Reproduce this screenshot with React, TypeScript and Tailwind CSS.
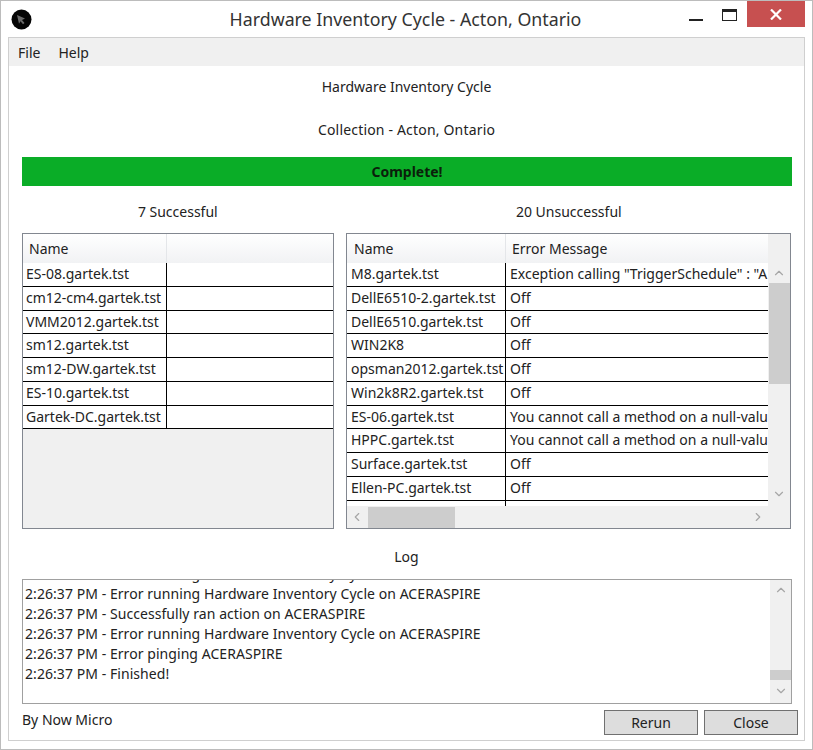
import { ChevronDown, ChevronLeft, ChevronRight, ChevronUp } from "lucide-react";

const successful = [
  "ES-08.gartek.tst",
  "cm12-cm4.gartek.tst",
  "VMM2012.gartek.tst",
  "sm12.gartek.tst",
  "sm12-DW.gartek.tst",
  "ES-10.gartek.tst",
  "Gartek-DC.gartek.tst",
];

const unsuccessful = [
  ["M8.gartek.tst", 'Exception calling "TriggerSchedule" : "A remote error occurred"'],
  ["DellE6510-2.gartek.tst", "Off"],
  ["DellE6510.gartek.tst", "Off"],
  ["WIN2K8", "Off"],
  ["opsman2012.gartek.tst", "Off"],
  ["Win2k8R2.gartek.tst", "Off"],
  ["ES-06.gartek.tst", "You cannot call a method on a null-valued expression."],
  ["HPPC.gartek.tst", "You cannot call a method on a null-valued expression."],
  ["Surface.gartek.tst", "Off"],
  ["Ellen-PC.gartek.tst", "Off"],
];

const logLines = [
  "2:26:37 PM - Error running Hardware Inventory Cycle on ACERASPIRE",
  "2:26:37 PM - Error running Hardware Inventory Cycle on ACERASPIRE",
  "2:26:37 PM - Successfully ran action on ACERASPIRE",
  "2:26:37 PM - Error running Hardware Inventory Cycle on ACERASPIRE",
  "2:26:37 PM - Error pinging ACERASPIRE",
  "2:26:37 PM - Finished!",
];

function HeaderCell({ label, className }: { label?: string; className: string }) {
  return <div className={`flex h-full shrink-0 items-center ${className}`}>{label}</div>;
}

function Row({ name, message, nameClass }: { name: string; message?: string; nameClass: string }) {
  return (
    <div className="flex h-[23.75px] shrink-0 border-b border-black bg-white">
      <div className={`shrink-0 overflow-hidden whitespace-nowrap border-r border-black leading-[22px] ${nameClass}`}>
        {name}
      </div>
      <div className="min-w-0 flex-1 overflow-hidden whitespace-nowrap pl-[4px] leading-[22px]">{message}</div>
    </div>
  );
}

export default function App() {
  return (
    <div
      className="flex h-[750px] w-[813px] flex-col border border-[#bcbcbc] bg-white text-[14px] text-[#222]"
      style={{ fontFamily: '"Noto Sans", "Open Sans", sans-serif' }}
    >
      {/* title bar */}
      <div className="relative flex h-[36px] shrink-0 items-center justify-center">
        <svg className="absolute left-[10px] top-[8px]" width="21" height="21" viewBox="0 0 21 21">
          <circle cx="10.5" cy="10.5" r="10" fill="#050505" />
          <path d="M6 6l8 3.500-3 1.500 2.500 3-1.500 1.200-2.500-3-1.500 2.500z" fill="#6a6a6a" />
        </svg>
        <span className="-ml-[2px] text-[17.8px] text-[#333]">Hardware Inventory Cycle - Acton, Ontario</span>
        <div className="absolute right-[7px] top-0 flex items-start">
          <div className="mr-[19px] mt-[18px] h-[2px] w-[14px] bg-[#222]" />
          <div className="mr-[10px] mt-[8px] h-[12px] w-[15px] border border-t-[3px] border-[#222]" />
          <div className="flex h-[26px] w-[58px] items-center justify-center bg-[#c75050]">
            <svg width="12" height="11" viewBox="0 0 12 11">
              <path d="M1 .5l10 10M11 .5l-10 10" stroke="#fff" strokeWidth="2.200" />
            </svg>
          </div>
        </div>
      </div>

      {/* client area */}
      <div className="mx-[7px] flex h-[704px] w-[797px] flex-col border border-[#cfcfcf]">
        <div className="flex h-[28px] shrink-0 items-center gap-[18px] bg-[#f0f0f0] pl-[9px]">
          <span>File</span>
          <span>Help</span>
        </div>

        <div className="flex min-h-0 flex-1 flex-col px-[13px]">
          <div className="mt-[11px] text-center leading-[20px]">Hardware Inventory Cycle</div>
          <div className="mt-[23px] text-center leading-[20px] tracking-[0.18px]">Collection - Acton, Ontario</div>

          <div className="mt-[17px] flex h-[29px] w-[770px] shrink-0 items-center justify-center bg-[#0aad27] font-bold text-[#0b1f0b]">
            Complete!
          </div>

          <div className="mt-[16px] flex h-[20px] shrink-0 text-center leading-[20px]">
            <div className="w-[312px]">7 Successful</div>
            <div className="ml-[13px] w-[445px]">20 Unsuccessful</div>
          </div>

          <div className="mt-[11px] flex h-[296px] shrink-0 gap-[12px]">
            {/* successful grid */}
            <div className="flex w-[313px] flex-col border border-[#828790] bg-[#f0f0f0]">
              <div className="flex h-[29px] shrink-0 bg-gradient-to-b from-white to-[#f1f2f4]">
                <HeaderCell label="Name" className="w-[144px] border-r border-[#e4e6e9] pl-[6px]" />
              </div>
              {successful.map((name) => (
                <Row key={name} name={name} nameClass="w-[144px] pl-[3px]" />
              ))}
            </div>

            {/* unsuccessful grid */}
            <div className="flex w-[445px] flex-col border border-[#828790] bg-[#f0f0f0]">
              <div className="flex min-h-0 flex-1">
                <div className="flex w-[421px] flex-col overflow-hidden bg-white">
                  <div className="flex h-[29px] shrink-0 bg-gradient-to-b from-white to-[#f1f2f4]">
                    <HeaderCell label="Name" className="w-[159px] border-r border-[#e4e6e9] pl-[7px]" />
                    <HeaderCell label="Error Message" className="flex-1 pl-[6px]" />
                  </div>
                  {unsuccessful.map(([name, message]) => (
                    <Row key={name} name={name} message={message} nameClass="w-[159px] pl-[4px]" />
                  ))}
                  <div className="ml-[158px] h-[7px] w-px shrink-0 bg-black" />
                </div>
                <div className="flex w-[22px] flex-col items-center bg-[#f0f0f0]">
                  <ChevronUp className="mt-[32px] size-[14px] text-[#a6a6a6]" />
                  <div className="mt-[3px] h-[101px] w-[21px] bg-[#cdcdcd]" />
                  <ChevronDown className="mt-[103px] size-[14px] text-[#a6a6a6]" />
                </div>
              </div>
              <div className="flex h-[22px] shrink-0 items-center bg-[#f0f0f0]">
                <ChevronLeft className="ml-[3px] size-[14px] text-[#a6a6a6]" />
                <div className="ml-[4px] h-[21px] w-[87px] bg-[#cdcdcd]" />
                <ChevronRight className="ml-[296px] size-[14px] text-[#a6a6a6]" />
              </div>
            </div>
          </div>

          <div className="mt-[18px] text-center leading-[20px]">Log</div>

          {/* log */}
          <div className="mt-[12px] flex h-[125px] w-[770px] shrink-0 border border-[#a0a0a0]">
            <div className="min-w-0 flex-1 overflow-hidden pl-[2px]">
              <div className="-mt-[16px] leading-[20px] tracking-[0.06px]">
                {logLines.map((line, i) => (
                  <div key={i} className="h-[20px] whitespace-nowrap">
                    {line}
                  </div>
                ))}
              </div>
            </div>
            <div className="flex w-[21px] flex-col items-center bg-[#f0f0f0]">
              <ChevronUp className="mt-[3px] size-[14px] text-[#a6a6a6]" />
              <div className="mt-[73px] h-[10px] w-[21px] bg-[#cdcdcd]" />
              <ChevronDown className="mt-[4px] size-[14px] text-[#a6a6a6]" />
            </div>
          </div>

          <div className="mt-[6px] flex items-start">
            <span className="leading-[20px]">By Now Micro</span>
            <div className="ml-auto -mr-[7px] flex gap-[6px]">
              <button className="h-[25px] w-[94px] border border-[#707070] bg-[#dddddd] leading-[22px]">Rerun</button>
              <button className="h-[25px] w-[94px] border border-[#707070] bg-[#dddddd] leading-[22px]">Close</button>
            </div>
          </div>
        </div>
      </div>
    </div>
  );
}
